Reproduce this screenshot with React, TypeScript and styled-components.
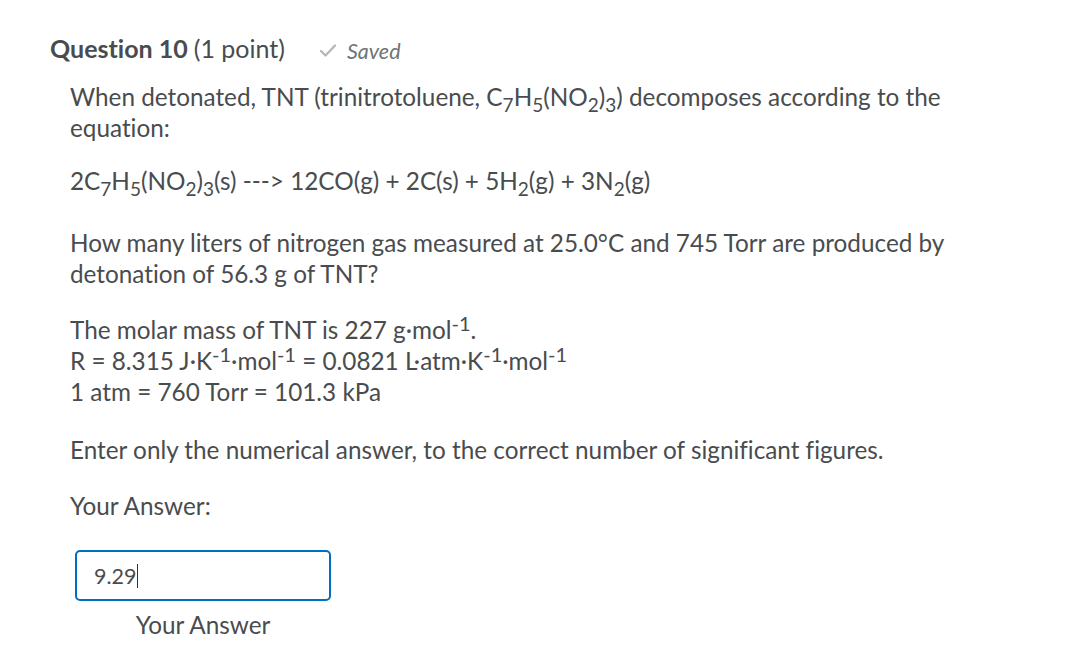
import React from 'react';
import styled, { createGlobalStyle } from 'styled-components';

const Global = createGlobalStyle`
  body {
    margin: 0;
    background: #ffffff;
    font-family: Lato, "Noto Sans", sans-serif;
    font-variant-ligatures: none;
    color: #494c4e;
  }
`;

const Page = styled.div`
  padding: 31px 0 0 50px;
`;

const Header = styled.div`
  display: flex;
  align-items: baseline;
  gap: 34px;
`;

const Title = styled.h2`
  margin: 0;
  font-size: 25px;
  font-weight: 700;
  line-height: 34px;
  color: #494c4e;

  span {
    font-weight: 400;
  }
`;

const Saved = styled.span`
  display: inline-flex;
  align-items: center;
  gap: 10px;
  font-size: 21.5px;
  font-style: italic;
  color: #6e7376;
`;

const Body = styled.div`
  padding: 0 0 0 20px;
  width: 900px;
`;

const P = styled.p<{ $gap?: number }>`
  margin: ${(p) => p.$gap ?? 0}px 0 0 0;
  font-size: 24.3px;
  line-height: 31px;
`;

const Sub = styled.sub`
  font-size: 19px;
  vertical-align: -6px;
  line-height: 0;
`;

const Sup = styled.sup`
  font-size: 20px;
  vertical-align: 8px;
  line-height: 0;
`;

const AnswerArea = styled.div`
  margin-top: 29px;
  width: 256px;
  margin-left: 5px;
  display: flex;
  flex-direction: column;
  align-items: center;
`;

const Input = styled.div`
  box-sizing: border-box;
  width: 256px;
  height: 51px;
  border: 2px solid #006fbf;
  border-radius: 5px;
  padding: 0 17px;
  display: flex;
  align-items: center;
  font-size: 21.5px;
  color: #494c4e;
`;

const Caret = styled.span`
  display: inline-block;
  width: 1px;
  height: 24px;
  background: #333;
  margin-left: 1px;
`;

const Label = styled.div`
  margin-top: 11px;
  font-size: 24.3px;
  line-height: 26px;
`;

export default function App() {
  return (
    <Page>
      <Global />
      <Header>
        <Title>
          Question 10 <span>(1 point)</span>
        </Title>
        <Saved>
          <svg width="18" height="15" viewBox="0 0 18 15">
            <path d="M2 8 L6.5 12.5 L16 2.5" fill="none" stroke="#b5b8ba" strokeWidth="2.4" strokeLinecap="round" strokeLinejoin="round" />
          </svg>
          Saved
        </Saved>
      </Header>
      <Body>
        <P $gap={16}>
          When detonated, TNT (trinitrotoluene, C<Sub>7</Sub>H<Sub>5</Sub>(NO<Sub>2</Sub>)<Sub>3</Sub>) decomposes according to the equation:
        </P>
        <P $gap={22}>
          2C<Sub>7</Sub>H<Sub>5</Sub>(NO<Sub>2</Sub>)<Sub>3</Sub>(s) ---&gt; 12CO(g) + 2C(s) + 5H<Sub>2</Sub>(g) + 3N<Sub>2</Sub>(g)
        </P>
        <P $gap={31}>
          How many liters of nitrogen gas measured at 25.0°C and 745 Torr are produced by detonation of 56.3 g of TNT?
        </P>
        <P $gap={25}>
          The molar mass of TNT is 227 g·mol<Sup>-1</Sup>.
          <br />
          R = 8.315 J·K<Sup>-1</Sup>·mol<Sup>-1</Sup> = 0.0821 L·atm·K<Sup>-1</Sup>·mol<Sup>-1</Sup>
          <br />1 atm = 760 Torr = 101.3 kPa
        </P>
        <P $gap={27}>Enter only the numerical answer, to the correct number of significant figures.</P>
        <P $gap={25}>Your Answer:</P>
        <AnswerArea>
          <Input>
            9.29<Caret />
          </Input>
          <Label>Your Answer</Label>
        </AnswerArea>
      </Body>
    </Page>
  );
}
